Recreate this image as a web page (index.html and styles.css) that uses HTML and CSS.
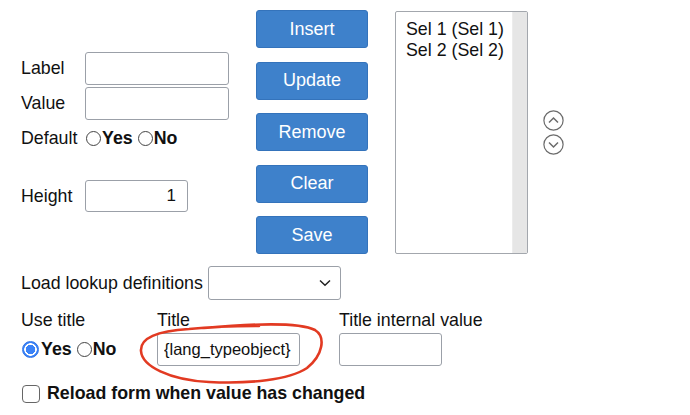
FILE: index.html
```html
<!DOCTYPE html>
<html lang="en">
<head>
    <meta charset="UTF-8">
    <title>Select definition</title>
    <link rel="stylesheet" href="styles.css">
</head>
<body>
    <div class="top">
        <div class="fields">
            <div class="field-row">
                <label class="caption" for="optLabel">Label</label>
                <input type="text" id="optLabel" class="text-input wide">
            </div>
            <div class="field-row second">
                <label class="caption" for="optValue">Value</label>
                <input type="text" id="optValue" class="text-input wide">
            </div>
            <div class="field-row radios-row">
                <span class="caption">Default</span>
                <label class="radio-label"><input type="radio" name="isDefault" class="radio">Yes</label>
                <label class="radio-label"><input type="radio" name="isDefault" class="radio">No</label>
            </div>
            <div class="field-row height-row">
                <label class="caption" for="optHeight">Height</label>
                <input type="text" id="optHeight" class="text-input short" value="1">
            </div>
        </div>

        <div class="buttons">
            <button type="button" class="btn">Insert</button>
            <button type="button" class="btn">Update</button>
            <button type="button" class="btn">Remove</button>
            <button type="button" class="btn">Clear</button>
            <button type="button" class="btn">Save</button>
        </div>

        <div class="listbox">
            <div class="list-items">
                <div>Sel 1 (Sel 1)</div>
                <div>Sel 2 (Sel 2)</div>
            </div>
            <div class="list-scroll"></div>
        </div>

        <div class="arrows">
            <svg width="21" height="21" viewBox="0 0 21 21">
                <circle cx="10.5" cy="10.5" r="9.6" fill="none" stroke="#6b6b6b" stroke-width="1.2"/>
                <path d="M6 12.5 L10.5 8 L15 12.5" fill="none" stroke="#6b6b6b" stroke-width="1.5"/>
            </svg>
            <svg width="21" height="21" viewBox="0 0 21 21">
                <circle cx="10.5" cy="10.5" r="9.6" fill="none" stroke="#6b6b6b" stroke-width="1.2"/>
                <path d="M6 8.5 L10.5 13 L15 8.5" fill="none" stroke="#6b6b6b" stroke-width="1.5"/>
            </svg>
        </div>
    </div>

    <div class="bottom">
        <div class="lookup-row">
            <label for="lookup">Load lookup definitions</label>
            <div class="select-wrap">
                <select id="lookup" class="lookup-select"></select>
                <svg class="chevron" width="12" height="8" viewBox="0 0 12 8">
                    <path d="M1 1.5 L6 6.2 L11 1.5" fill="none" stroke="#222" stroke-width="1.5"/>
                </svg>
            </div>
        </div>

        <div class="title-grid">
            <span>Use title</span>
            <span>Title</span>
            <span>Title internal value</span>

            <div class="title-radios">
                <label class="radio-label"><input type="radio" name="useTitle" class="radio" checked>Yes</label>
                <label class="radio-label"><input type="radio" name="useTitle" class="radio">No</label>
            </div>
            <div class="title-cell">
                <input type="text" class="text-input title-input" value="{lang_typeobject}">
                <svg class="scribble" width="200" height="70" viewBox="0 0 200 70">
                    <path d="M65 5 C110 1 160 -1 176 7 C187 14 184 32 168 45 C150 57 110 61 70 59 C30 57 3 43 2 28 C1 15 18 8 50 6 C70 4 95 3 120 3" fill="none" stroke="#e23a22" stroke-width="2.6" stroke-linecap="round"/>
                </svg>
            </div>
            <input type="text" class="text-input internal-input">
        </div>

        <label class="reload-row">
            <input type="checkbox" class="check">
            <span>Reload form when value has changed</span>
        </label>
    </div>
</body>
</html>
```

FILE: styles.css
```css
body {
    margin: 0;
    font-family: "Liberation Sans", Arial, sans-serif;
    font-size: 17.8px;
    color: #111;
    background: #fff;
}
.top {
    display: flex;
    align-items: center;
    padding-top: 10px;
}
.fields {
    margin-left: 21px;
    width: 235px;
}
.field-row {
    display: flex;
    align-items: center;
}
.field-row.second {
    margin-top: 2px;
}
.caption {
    width: 64px;
    flex-shrink: 0;
}
.radios-row {
    height: 36px;
}
.height-row {
    margin-top: 24px;
}
.text-input {
    box-sizing: border-box;
    height: 33px;
    border: 1px solid #9ba0a8;
    border-radius: 3px;
    font-family: inherit;
    font-size: 17px;
    padding: 0 8px;
    color: #111;
    outline: none;
}
.wide {
    width: 144px;
}
.short {
    width: 103px;
    height: 32px;
    text-align: right;
    padding-right: 11px;
}
.radio-label {
    display: inline-flex;
    align-items: center;
    font-weight: bold;
    margin-right: 4px;
}
.radio {
    appearance: none;
    box-sizing: border-box;
    width: 15px;
    height: 15px;
    margin: 0 1px 0 1px;
    border: 1px solid #444;
    border-radius: 50%;
    background: #fff;
}
.radio:checked {
    width: 17px;
    height: 17px;
    margin-right: 2px;
    border: 1px solid #2f74e8;
    background: radial-gradient(circle, #3a82f7 0 4.5px, #fff 5px 6px, #3a82f7 6.5px);
}
.buttons {
    display: flex;
    flex-direction: column;
    gap: 13.5px;
    width: 112px;
}
.btn {
    height: 38px;
    background-color: #3e81cb;
    border: 1px solid #3473bb;
    border-radius: 3px;
    color: #fff;
    font-family: inherit;
    font-size: 18px;
    cursor: pointer;
}
.listbox {
    margin-left: 27px;
    width: 133px;
    height: 243px;
    box-sizing: border-box;
    border: 1px solid #a3a7ad;
    border-radius: 2px;
    display: flex;
}
.list-items {
    flex: 1;
    padding: 7px 0 0 10px;
    line-height: 21px;
}
.list-scroll {
    width: 14px;
    background: #e6e6e6;
    border-left: 1px solid #ececec;
}
.arrows {
    margin-left: 15px;
    display: flex;
    flex-direction: column;
    gap: 3px;
}
.bottom {
    padding-left: 21px;
    margin-top: 12px;
}
.lookup-row {
    display: flex;
    align-items: center;
}
.select-wrap {
    position: relative;
    margin-left: 5px;
}
.lookup-select {
    appearance: none;
    width: 133px;
    height: 34px;
    border: 1px solid #9ba0a8;
    border-radius: 3px;
    background: #fff;
    display: block;
}
.chevron {
    position: absolute;
    right: 10px;
    top: 13px;
}
.title-grid {
    display: grid;
    grid-template-columns: 136px 182px auto;
    row-gap: 2px;
    margin-top: 10px;
    align-items: center;
    line-height: 21px;
}
.title-radios {
    display: flex;
    align-items: center;
}
.title-cell {
    position: relative;
}
.title-input {
    width: 143px;
    font-size: 16.5px;
    padding-left: 6px;
}
.internal-input {
    width: 103px;
}
.scribble {
    position: absolute;
    left: -18px;
    top: -10px;
}
.reload-row {
    display: flex;
    align-items: center;
    margin-top: 17px;
    font-weight: bold;
}
.check {
    appearance: none;
    width: 18px;
    height: 18px;
    margin: 0 7px 0 1px;
    border: 1.5px solid #666;
    border-radius: 4px;
    background: #fff;
}
```
